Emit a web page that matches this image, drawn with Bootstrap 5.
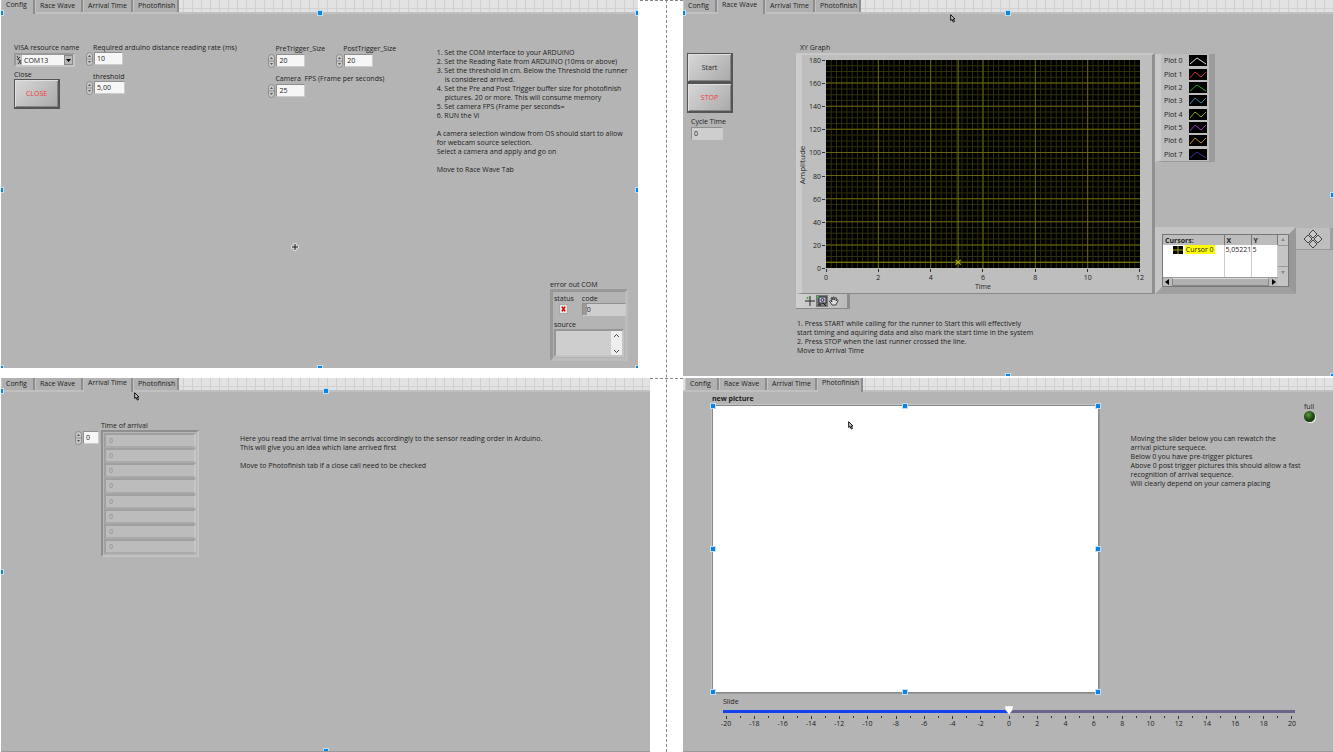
<!DOCTYPE html>
<html lang="en">
<head>
<meta charset="utf-8">
<meta name="viewport" content="width=device-width, initial-scale=1">
<title>Race timing front panels</title>
<link href="https://cdn.jsdelivr.net/npm/bootstrap@5.3.0/dist/css/bootstrap.min.css" rel="stylesheet">
<style>
:root{--face:#b4b4b4;--light:#cbcbcb;--dark:#8a8a8a;--ink:#1c1c1c;--sel:#0a84e4}
body{font-family:"Open Sans",Lato,sans-serif;font-size:7px;line-height:9px;color:var(--ink);background:#fff}
button,input,select{font:inherit;color:inherit;border-radius:0}
p{margin:0 0 9px}
.sheet{position:relative;gap:33px;z-index:0}
.half{flex:1 1 0;min-width:0}
.left-half{gap:10px}.right-half{gap:2px}
.dash-v{position:absolute;top:0;bottom:0;left:50%;margin-left:-1px;border-left:1px dashed #888}
.dash-h{position:absolute;left:48%;right:48%;border-top:1px dashed #888;z-index:-1}
.dash-h.top-line{top:0}.dash-h.mid-line{top:378px}
/* front panel window */
.fp{position:relative;background:var(--face);overflow:hidden}
.fp-config{min-height:368px;margin:0 12px 0 1px}
.fp-arrival{margin-left:1px;border-bottom:1px solid #999}
.fp-race{min-height:376px}
.fp-photo{border-bottom:1px solid #999}
.strip{height:12px;background-color:#e2e2e2;background-image:linear-gradient(90deg,#cfcfcf 1px,transparent 1px),linear-gradient(#d2d2d2 1px,transparent 1px);background-size:9px 9px;background-position:2px 8px;flex-wrap:nowrap}
.strip button{border:0;border-right:2px solid #8d8d8d;border-left:1px solid #c4c4c4;background:#b0b0b0;padding:0 0 2px 4px;height:12px;text-align:left;white-space:nowrap;width:50px}
.strip button:first-child{width:34px}
.strip button:nth-child(2){width:48px}
.strip button:last-child{width:46px}
.strip button.active{background:var(--face);height:14px;padding-bottom:5px;position:relative;z-index:1}
.fp-photo .strip{padding-left:2px}
.fp-body{border-top:2px solid #c0c0c0}
.grip{position:absolute;width:4px;height:4px;background:var(--sel);outline:1px solid #c3dcef;transform:translate(-50%,-50%);z-index:2}
.ptr{position:absolute;z-index:2}
/* controls */
.num{height:13px}
.num svg{width:8px;height:14px;flex:none}
.num input,.field{border:1px solid #8f8f8f;border-right-color:#ccc;border-bottom-color:#ccc;background:#f6f6f6;padding:0 2px;height:13px}
.w-s{width:29px}.w-m{width:31px}
.lbl{display:block}
.indent{padding-left:7px}
.push{width:46px;height:30px;border:1px solid #555;border-right-width:2px;border-bottom-width:2px;background:linear-gradient(135deg,#d8d8d8,#a9a9a9);box-shadow:inset 1px 1px #e0e0e0,inset -1px -1px #858585;padding:0;display:block}
.red{color:#f03838}
/* config page */
.cfg-grid{display:grid;grid-template-columns:72fr 182fr 168fr 201fr;padding:29px 0 0 13px}
.visa{width:61px;height:14px;margin:1px 0 3px;border:2px solid #999;border-right-color:#c6c6c6;border-bottom-color:#c6c6c6;background:#f6f6f6}
.visa select{appearance:none;border:0;background:transparent;padding:0 0 0 2px;flex:1;min-width:0;height:10px}
.visa .arrow{width:9px;height:10px;background:#b8b8b8;border:1px solid #888;flex:none}
.below{padding-top:7px}
.trig{padding-top:1px}
.trig .num{margin-top:1px}
.post{margin-left:11px}
.notes{white-space:pre-line}
.notes ol{list-style:none;margin:0 0 9px;padding:0;white-space:normal}
.steps{padding-top:5px}
.in2{padding-left:8px}
.err{width:78px;margin:auto 10px 7px auto}
.err-box{border:3px solid #989898;border-right-color:#bdbdbd;border-bottom-color:#bdbdbd;height:72px;padding:2px 1px 0 1px}
.err-box .field{background:linear-gradient(90deg,#999 4px,#cecece 4px);width:44px;padding-left:4px}
.chk{appearance:none;width:9px;height:10px;background:#e6e6e6 url("data:image/svg+xml,%3Csvg xmlns='http://www.w3.org/2000/svg' viewBox='0 0 9 10'%3E%3Cpath d='M2.5 2l4 6M6.5 2l-4 6' stroke='%23d00' stroke-width='2'/%3E%3C/svg%3E");border:1px solid #aaa;margin:1px 0 0 5px;display:block}
.src{background:#cecece;border:2px solid #969696;border-right-color:#c4c4c4;border-bottom-color:#c4c4c4;height:28px}
.src textarea{border:0;background:transparent;resize:none;padding:0;min-width:0;flex:1}
.src .bar{width:11px;background:#eee}
/* race wave page */
.race-row{padding-top:28px}
.race-side{width:113px;padding:11px 0 0 4px}
.cyc{padding:4px 0 0 4px}
.cyc .field{background:#cecece;margin-top:1px;width:32px}
.gname{padding:1px 0 1px 4px}
.graph{background:#bebebe;border-top:2px solid #c9c9c9;border-left:6px solid #cdcdcd;border-right:3px solid #909090;border-bottom:1px solid #888;display:grid;grid-template-columns:24px 1fr 12px;grid-template-rows:208px 25px;padding:5px 0 0 0;height:241px}
.plot{background:#000;display:block;width:100%;height:208px}
.yax{position:relative;padding-right:1px;margin:-4px 0 -5px}
.yax span{text-align:right;height:9px}
.yname{position:absolute;left:-5px;top:50%;writing-mode:vertical-rl;transform:translateY(-50%) rotate(180deg);font-size:8px}
.xax{padding-top:5px}
.xax span{width:0;display:flex;justify-content:center}
.tk::after{content:"";display:inline-block;width:3px;height:1px;background:#333;margin-left:1px;vertical-align:2px}
.xt::before{content:"";position:absolute;height:3px;width:1px;background:#333;margin-top:-4px}
.right-side{width:178px;flex:none;padding:11px 0 15px}
.legend-box{width:60px;background:#bdbdbd;border-left:6px solid #cacaca;border-right:6px solid #9c9c9c;border-bottom:1px solid #999;padding:0 2px 0 3px;margin-top:1px;height:108px}
.legend-box svg{background:#000;width:18px;height:11px}
.cur-box{width:141px;height:67px;border:7px solid #bcbcbc;border-left-color:#c6c6c6;border-top-color:#c4c4c4;border-right-color:#999;border-bottom-color:#a0a0a0}
.cur-inner{border:1px solid #777;height:53px}
.cur-box table{width:100%;table-layout:fixed;line-height:9px;background:#fff}
.cur-box th{background:#bcbcbc;border-right:1px solid #777;padding:0 2px;height:10px}
.cur-box th:first-child{width:61px}.cur-box th:nth-child(2){width:27px}
.cur-box td{padding:0 0 0 1px;height:32px;vertical-align:top;border-right:1px solid #ccc;white-space:nowrap}
.cur-box td.cname{padding-left:10px}
.hl{background:#ff0;padding:0 1px}
.vbar{width:10px;background:#c4c4c4}
.hbar{height:9px;background:#bbb;border-top:1px solid #999}
.thumb-h{flex:1;background:#b0b0b0;border:1px solid #888;border-top-color:#ddd}
.dpad{width:37px;height:22px;background:#bebebe;border-right:3px solid #a0a0a0;border-bottom:1px solid #999;margin-top:1px}
.tools{width:54px;height:15px;background:linear-gradient(90deg,#d0d0d0,#bbb);border-right:3px solid #8c8c8c;border-bottom:1px solid #888;padding-left:8px}
.tools button{padding:0;border:0;background:transparent;width:12px;height:12px;line-height:0}
.tools button.on{background:#777}
.race-notes{padding:10px 0 0 114px}
/* arrival page */
.arrival-row{padding:29px 0 0 74px}
.idx{margin:10px 2px 0 0}
.idx input{width:16px}
.arr{width:98px;height:127px;border:2px solid #8f8f8f;border-right-color:#c2c2c2;border-bottom-color:#c2c2c2;padding:1px}
.arr input{flex:1;min-height:0;width:100%;background:#bcbcbc;border:2px solid #a0a0a0;border-right-color:#c6c6c6;border-bottom-color:#aaa;padding:0 3px;color:#8c8c8c}
.arr-notes{margin:13px 0 0 41px}
/* photofinish page */
.photo-row{display:grid;grid-template-columns:386fr 234fr;padding-left:29px}
.pname{padding:2px 0}
.pic{position:relative;background:#fff;border:1px solid #888;box-shadow:1px 1px #999,-1px -1px #c4c4c4;aspect-ratio:385/287}
.photo-side{padding:10px 0 0 32px}
.full-box{margin:0 17px 12px auto;width:12px}
.led{width:11px;height:11px;border-radius:50%;background:radial-gradient(circle at 40% 35%,#5d9a3d,#1d4a10 50%,#0f2a08);box-shadow:1px 1px 1px #eee}
.slide{margin:0 38px 0 40px;padding-top:4px}
.rng{appearance:none;display:block;width:100%;height:8px;margin:0;background:linear-gradient(90deg,#1540ee 50%,#69648a 50%) center 4px/100% 3px no-repeat}
.rng::-webkit-slider-thumb{appearance:none;width:8px;height:8px;background:#fff;clip-path:polygon(0 0,100% 0,90% 50%,50% 100%,10% 50%)}
.ticks,.nums{padding:0 3px}
.ticks i{width:1px;height:2px;background:#333;margin-top:2px}
.ticks i:nth-child(odd){height:3px}
.nums span{width:0;display:flex;justify-content:center}
</style>
</head>
<body>
<svg width="0" height="0" class="position-absolute" aria-hidden="true">
<defs>
<symbol id="spin" viewBox="0 0 8 14"><rect x=".5" y=".5" width="6" height="13" rx="3" fill="#c9c9c9" stroke="#808080" stroke-width=".8"/><path d="M1 7h5" stroke="#808080" stroke-width=".8"/><path d="M2 5l1.500-2L5 5zM2 9l1.500 2L5 9z" fill="#555"/></symbol>
<symbol id="ptr" viewBox="0 0 6 9"><path d="M.7.7v5.800l1.400-1.200 1.200 2.800 1.200-.6-1.200-2.500h1.600z" fill="#ccc" stroke="#111" stroke-width="1"/></symbol>
</defs>
</svg>

<main class="sheet d-flex min-vh-100">
<div class="dash-v"></div><div class="dash-h top-line"></div><div class="dash-h mid-line"></div>

<div class="half left-half d-flex flex-column">
<section class="fp fp-config d-flex flex-column">
  <nav class="strip d-flex"><button class="active">Config</button><button>Race Wave</button><button>Arrival Time</button><button>Photofinish</button></nav>
  <div class="fp-body flex-grow-1 d-flex flex-column">
    <div class="cfg-grid">
      <div>
        <label class="lbl" for="visa">VISA resource name</label>
        <div class="visa d-flex align-items-center"><svg width="6" height="10" viewBox="0 0 6 10"><rect width="6" height="10" fill="#bbb"/><path d="M1 1l4 8M1 5l3-3M2 9l3-4" stroke="#333" stroke-width=".9" fill="none"/></svg>
        <select id="visa"><option>COM13</option></select><span class="arrow d-flex"><svg width="7" height="8" viewBox="0 0 7 8"><path d="M1 3h5L3.500 6z"/></svg></span></div>
        <label class="lbl" for="closeb">Close</label>
        <button class="push red" id="closeb">CLOSE</button>
      </div>
      <div>
        <div class="indent"><label class="lbl" for="rate">Required arduino distance reading rate (ms)</label></div>
        <div class="num d-flex"><svg><use href="#spin"/></svg><input id="rate" class="w-s" value="10"></div>
        <div class="indent below"><label class="lbl" for="thr">threshold</label></div>
        <div class="num d-flex"><svg><use href="#spin"/></svg><input id="thr" class="w-m" value="5,00"></div>
      </div>
      <div class="trig">
        <div class="d-flex">
          <div><div class="indent"><label class="lbl" for="pre">PreTrigger_Size</label></div><div class="num d-flex"><svg><use href="#spin"/></svg><input id="pre" class="w-s" value="20"></div></div>
          <div class="post"><div class="indent"><label class="lbl" for="post">PostTrigger_Size</label></div><div class="num d-flex"><svg><use href="#spin"/></svg><input id="post" class="w-s" value="20"></div></div>
        </div>
        <div class="indent below"><label class="lbl" for="fps">Camera&nbsp; FPS (Frame per seconds)</label></div>
        <div class="num d-flex"><svg><use href="#spin"/></svg><input id="fps" class="w-s" value="25"></div>
      </div>
      <div class="notes steps"><ol><li>1. Set the COM interface to your ARDUINO</li><li>2. Set the Reading Rate from ARDUINO (10ms or above)</li><li>3. Set the threshold in cm. Below the Threshold the runner<div class="in2">is considered arrived.</div></li><li>4. Set the Pre and Post Trigger buffer size for photofinish<div class="in2">pictures. 20 or more. This will consume memory</div></li><li>5. Set camera FPS (Frame per seconds=</li><li>6. RUN the Vi</li></ol><p>A camera selection window from OS should start to allow
for webcam source selection.
Select a camera and apply and go on</p><p>Move to Race Wave Tab</p></div>
    </div>
    <div class="err"><div>error out COM</div>
      <div class="err-box">
        <div class="d-flex gap-2"><div><label class="lbl" for="st">status</label><input type="checkbox" class="chk" id="st"></div><div><label class="lbl" for="code">code</label><input id="code" class="field d-block" value="0"></div></div>
        <label for="src" class="lbl mt-1">source</label>
        <div class="src d-flex"><textarea id="src"></textarea><div class="bar"><svg width="11" height="24" viewBox="0 0 11 24" fill="none" stroke="#444"><path d="M3 6l2.500-2.500L8 6M3 19l2.500 2.500L8 19"/></svg></div></div>
      </div>
    </div>
  </div>
  <svg class="ptr" style="left:290px;top:243px" width="8" height="8" viewBox="0 0 8 8"><path d="M4 0v8M0 4h8" stroke="#ddd" stroke-width="3"/><path d="M4 1v6M1 4h6" stroke="#111"/></svg>
  <i class="grip" style="left:0;top:13px"></i><i class="grip" style="left:50%;top:13px"></i><i class="grip" style="left:100%;top:13px"></i><i class="grip" style="left:0;top:190px"></i><i class="grip" style="left:100%;top:190px"></i><i class="grip" style="left:0;top:100%"></i><i class="grip" style="left:50%;top:100%"></i><i class="grip" style="left:100%;top:100%"></i>
</section>

<section class="fp fp-arrival d-flex flex-column flex-grow-1">
  <nav class="strip d-flex"><button>Config</button><button>Race Wave</button><button class="active">Arrival Time</button><button>Photofinish</button></nav>
  <div class="fp-body flex-grow-1">
    <div class="d-flex arrival-row">
      <div class="num d-flex idx"><svg><use href="#spin"/></svg><input aria-label="Index" value="0"></div>
      <div><label for="a0" class="lbl">Time of arrival</label><div class="arr d-flex flex-column"><input id="a0" value="0"><input aria-label="1" value="0"><input aria-label="2" value="0"><input aria-label="3" value="0"><input aria-label="4" value="0"><input aria-label="5" value="0"><input aria-label="6" value="0"><input aria-label="7" value="0"></div></div>
      <div class="notes arr-notes"><p>Here you read the arrival time in seconds accordingly to the sensor reading order in Arduino.
This will give you an idea which lane arrived first</p><p>Move to Photofinish tab if a close call need to be checked</p></div>
    </div>
  </div>
  <svg class="ptr" style="left:133px;top:14px" width="6" height="9"><use href="#ptr"/></svg>
  <i class="grip" style="left:0;top:13px"></i><i class="grip" style="left:50%;top:13px"></i><i class="grip" style="left:0;top:194px"></i><i class="grip" style="left:50%;top:100%"></i>
</section>
</div>

<div class="half right-half d-flex flex-column">
<section class="fp fp-race d-flex flex-column">
  <nav class="strip d-flex"><button>Config</button><button class="active">Race Wave</button><button>Arrival Time</button><button>Photofinish</button></nav>
  <div class="fp-body flex-grow-1">
    <div class="d-flex race-row">
      <div class="race-side"><button class="push">Start</button><button class="push red">STOP</button>
        <div class="cyc"><label class="lbl" for="cyc">Cycle Time</label><input id="cyc" class="field d-block" value="0"></div></div>
      <div class="flex-grow-1">
        <div class="gname">XY Graph</div>
        <div class="graph">
          <div class="yax d-flex flex-column justify-content-between" id="yax"><b class="yname fw-normal">Amplitude</b></div>
          <svg class="plot" id="plot" viewBox="0 0 12 180" preserveAspectRatio="none"></svg><div></div>
          <div></div><div><div class="xax d-flex justify-content-between" id="xax"></div><div class="text-center">Time</div></div><div></div>
        </div>
        <div class="tools d-flex align-items-center">
          <button aria-label="Cursor"><svg width="12" height="12" viewBox="0 0 12 12"><path d="M6 1v10M1 6h10" stroke="#222"/><circle cx="3.500" cy="3" r="1" fill="#3a3"/></svg></button>
          <button aria-label="Zoom" class="on"><svg width="12" height="12" viewBox="0 0 12 12"><rect x="3" y="2" width="7" height="6" fill="#ccd" stroke="#222"/><circle cx="6.500" cy="5" r="1.500" fill="none" stroke="#225"/><path d="M7 8l3 3M2 10h3" stroke="#111"/><circle cx="2" cy="2" r="1" fill="#3c3"/></svg></button>
          <button aria-label="Pan"><svg width="12" height="12" viewBox="0 0 12 12"><path d="M4 10L1.500 6l1-.5L4 7 3 3l1-.5L5 5V2h1l.5 3L7.500 2.500l1 .5-.5 3 1.500-1.500.7.7L8 10z" fill="#ddd" stroke="#222" stroke-width=".8"/></svg></button>
        </div>
      </div>
      <div class="right-side d-flex flex-column">
        <div class="legend-box d-flex flex-column justify-content-around" id="legend"></div>
        <div class="d-flex mt-auto"><div class="cur-box"><div class="cur-inner d-flex">
          <div class="flex-grow-1 d-flex flex-column"><table><thead><tr><th>Cursors:</th><th>X</th><th>Y</th></tr></thead><tbody><tr><td class="cname"><svg width="10" height="8" viewBox="0 0 10 8"><path d="M0 0h10v8H0z"/><path d="M5 0v8M0 4h10" stroke="#aa0"/></svg> <span class="hl">Cursor 0</span></td><td>5,05221</td><td>5</td></tr></tbody></table>
          <div class="hbar d-flex mt-auto"><svg width="9" height="8" viewBox="0 0 9 8"><path d="M6 1v6L2 4z"/></svg><span class="thumb-h"></span><svg width="9" height="8" viewBox="0 0 9 8"><path d="M3 1v6l4-3z"/></svg></div></div>
          <div class="vbar"><svg width="10" height="42" viewBox="0 0 10 42" fill="#888"><path d="M3 6h4L5 3zM3 36h4l-2 3z"/><path d="M0 10.500h10M0 31.500h10" stroke="#999"/></svg></div></div></div>
          <div class="dpad d-flex justify-content-center align-items-center"><svg width="20" height="20" viewBox="0 0 20 20" fill="#c8c8c8" stroke="#444"><path d="M10 1l4 4-4 4-4-4zM10 11l4 4-4 4-4-4zM5 6l4 4-4 4-4-4zM15 6l4 4-4 4-4-4z"/></svg></div></div>
      </div>
    </div>
    <p class="notes race-notes">1. Press START while calling for the runner to Start this will effectively
start timing and aquiring data and also mark the start time in the system
2. Press STOP when the last runner crossed the line.
Move to Arrival Time</p>
  </div>
  <svg class="ptr" style="left:267px;top:14px" width="6" height="9"><use href="#ptr"/></svg>
  <i class="grip" style="left:0;top:13px"></i><i class="grip" style="left:50%;top:13px"></i><i class="grip" style="left:100%;top:195px"></i><i class="grip" style="left:50%;top:100%"></i><i class="grip" style="left:100%;top:100%"></i>
</section>

<section class="fp fp-photo d-flex flex-column flex-grow-1">
  <nav class="strip d-flex"><button>Config</button><button>Race Wave</button><button>Arrival Time</button><button class="active">Photofinish</button></nav>
  <div class="fp-body flex-grow-1">
    <div class="photo-row">
      <div><div class="fw-bold pname">new picture</div>
        <div class="pic"><i class="grip" style="left:0;top:0"></i><i class="grip" style="left:50%;top:0"></i><i class="grip" style="left:100%;top:0"></i><i class="grip" style="left:0;top:50%"></i><i class="grip" style="left:100%;top:50%"></i><i class="grip" style="left:0;top:100%"></i><i class="grip" style="left:50%;top:100%"></i><i class="grip" style="left:100%;top:100%"></i></div></div>
      <div class="photo-side"><div class="full-box"><div>full</div><div class="led"></div></div>
        <p class="notes">Moving the slider below you can rewatch the
arrival picture sequece.
Below 0 you have pre-trigger pictures
Above 0 post trigger pictures this should allow a fast
recognition of arrival sequence.
Will clearly depend on your camera placing</p></div>
    </div>
    <div class="slide"><label class="lbl" for="sl">Slide</label><input type="range" class="rng" id="sl" min="-20" max="20" value="0"><div class="ticks d-flex justify-content-between" id="ticks"></div><div class="nums d-flex justify-content-between" id="nums"></div></div>
  </div>
  <svg class="ptr" style="left:165px;top:43px" width="6" height="9"><use href="#ptr"/></svg>
</section>
</div>
</main>
<script src="https://cdn.jsdelivr.net/npm/bootstrap@5.3.0/dist/js/bootstrap.bundle.min.js"></script>
<script>
const $=id=>document.getElementById(id);
// graph grid in axis units
const line=(x1,y1,x2,y2,c)=>`<line x1="${x1}" y1="${y1}" x2="${x2}" y2="${y2}" stroke="${c}" vector-effect="non-scaling-stroke"/>`;
let g='';
for(let i=1;i<60;i++)g+=line(i/5,0,i/5,180,'#30300a');
for(let i=1;i<36;i++)g+=line(0,i*5,12,i*5,'#30300a');
for(let i=2;i<12;i+=2)g+=line(i,0,i,180,'#66660a');
for(let i=20;i<180;i+=20)g+=line(0,i,12,i,'#66660a');
g+=line(5.05,0,5.05,180,'#77770a')+line(0,175,12,175,'#88880a')+line(4.95,173,5.15,177,'#bb0')+line(4.95,177,5.15,173,'#bb0');
$('plot').innerHTML=g;
for(let v=180;v>=0;v-=20)$('yax').insertAdjacentHTML('beforeend',`<span class="tk">${v}</span>`);
for(let v=0;v<=12;v+=2)$('xax').insertAdjacentHTML('beforeend',`<span class="xt">${v}</span>`);
const up='M1 9L8 3L17 9',wave='M1 9L6 3L12 8L17 3';
[['#ddd',up],['#c33',wave],['#2a2',up],['#38a',wave],['#8a3',wave],['#93b',wave],['#b83',wave],['#33a',up]].forEach(([c,d],i)=>
$('legend').insertAdjacentHTML('beforeend',`<div class="d-flex justify-content-between align-items-center">Plot ${i}<svg viewBox="0 0 18 11"><path d="${d}" fill="none" stroke="${c}"/></svg></div>`));
for(let i=0;i<41;i++)$('ticks').insertAdjacentHTML('beforeend','<i></i>');
for(let v=-20;v<=20;v+=2)$('nums').insertAdjacentHTML('beforeend',`<span>${v}</span>`);
</script>
</body>
</html>
